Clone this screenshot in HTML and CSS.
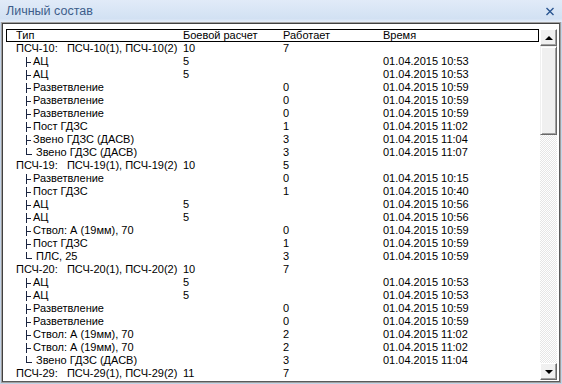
FILE: index.html
```html
<!DOCTYPE html>
<html lang="ru">
<head>
<meta charset="utf-8">
<title>Личный состав</title>
<link rel="stylesheet" href="styles.css">
</head>
<body>
<div class="window">
  <div class="titlebar">
    <span class="title">Личный состав</span>
    <svg class="close" width="10" height="9" viewBox="0 0 10 9"><path d="M1.5 1 L8.5 8 M8.5 1 L1.5 8" stroke="#2a5590" stroke-width="1.4" fill="none"/></svg>
  </div>
  <div class="panel">
    <div class="panel-body">
      <div class="list">
        <div class="header">
          <span class="c1">Тип</span><span>Боевой расчет</span><span>Работает</span><span>Время</span>
        </div>
        <div class="rows">
          <div class="row"><span class="c1">ПСЧ-10:   ПСЧ-10(1), ПСЧ-10(2)</span><span>10</span><span>7</span><span></span></div>
          <div class="row"><span class="c1"><i class="br"></i>АЦ</span><span>5</span><span></span><span>01.04.2015 10:53</span></div>
          <div class="row"><span class="c1"><i class="br"></i>АЦ</span><span>5</span><span></span><span>01.04.2015 10:53</span></div>
          <div class="row"><span class="c1"><i class="br"></i>Разветвление</span><span></span><span>0</span><span>01.04.2015 10:59</span></div>
          <div class="row"><span class="c1"><i class="br"></i>Разветвление</span><span></span><span>0</span><span>01.04.2015 10:59</span></div>
          <div class="row"><span class="c1"><i class="br"></i>Разветвление</span><span></span><span>0</span><span>01.04.2015 10:59</span></div>
          <div class="row"><span class="c1"><i class="br"></i>Пост ГДЗС</span><span></span><span>1</span><span>01.04.2015 11:02</span></div>
          <div class="row"><span class="c1"><i class="br"></i>Звено ГДЗС (ДАСВ)</span><span></span><span>3</span><span>01.04.2015 11:04</span></div>
          <div class="row"><span class="c1"><i class="br last"></i>Звено ГДЗС (ДАСВ)</span><span></span><span>3</span><span>01.04.2015 11:07</span></div>
          <div class="row"><span class="c1">ПСЧ-19:   ПСЧ-19(1), ПСЧ-19(2)</span><span>10</span><span>5</span><span></span></div>
          <div class="row"><span class="c1"><i class="br"></i>Разветвление</span><span></span><span>0</span><span>01.04.2015 10:15</span></div>
          <div class="row"><span class="c1"><i class="br"></i>Пост ГДЗС</span><span></span><span>1</span><span>01.04.2015 10:40</span></div>
          <div class="row"><span class="c1"><i class="br"></i>АЦ</span><span>5</span><span></span><span>01.04.2015 10:56</span></div>
          <div class="row"><span class="c1"><i class="br"></i>АЦ</span><span>5</span><span></span><span>01.04.2015 10:56</span></div>
          <div class="row"><span class="c1"><i class="br"></i>Ствол: А (19мм), 70</span><span></span><span>0</span><span>01.04.2015 10:59</span></div>
          <div class="row"><span class="c1"><i class="br"></i>Пост ГДЗС</span><span></span><span>1</span><span>01.04.2015 10:59</span></div>
          <div class="row"><span class="c1"><i class="br last"></i>ПЛС, 25</span><span></span><span>3</span><span>01.04.2015 10:59</span></div>
          <div class="row"><span class="c1">ПСЧ-20:   ПСЧ-20(1), ПСЧ-20(2)</span><span>10</span><span>7</span><span></span></div>
          <div class="row"><span class="c1"><i class="br"></i>АЦ</span><span>5</span><span></span><span>01.04.2015 10:53</span></div>
          <div class="row"><span class="c1"><i class="br"></i>АЦ</span><span>5</span><span></span><span>01.04.2015 10:53</span></div>
          <div class="row"><span class="c1"><i class="br"></i>Разветвление</span><span></span><span>0</span><span>01.04.2015 10:59</span></div>
          <div class="row"><span class="c1"><i class="br"></i>Разветвление</span><span></span><span>0</span><span>01.04.2015 10:59</span></div>
          <div class="row"><span class="c1"><i class="br"></i>Ствол: А (19мм), 70</span><span></span><span>2</span><span>01.04.2015 11:02</span></div>
          <div class="row"><span class="c1"><i class="br"></i>Ствол: А (19мм), 70</span><span></span><span>2</span><span>01.04.2015 11:02</span></div>
          <div class="row"><span class="c1"><i class="br last"></i>Звено ГДЗС (ДАСВ)</span><span></span><span>3</span><span>01.04.2015 11:04</span></div>
          <div class="row"><span class="c1">ПСЧ-29:   ПСЧ-29(1), ПСЧ-29(2)</span><span>11</span><span>7</span><span></span></div>
        </div>
      </div>
      <div class="scrollbar">
        <div class="sbtn"><span class="tri up"></span></div>
        <div class="thumb"></div>
        <div class="track"></div>
        <div class="sbtn"><span class="tri down"></span></div>
      </div>
    </div>
  </div>
</div>
</body>
</html>
```
FILE: styles.css
```css
* { box-sizing: border-box; }
html, body { margin: 0; padding: 0; }
body { width: 562px; height: 384px; overflow: hidden; }
.window {
  width: 562px; height: 384px;
  background: #c4d4e8;
  display: flex; flex-direction: column;
  font-family: "Liberation Sans", Arial, sans-serif;
}
.titlebar {
  height: 22px; flex: none;
  background: linear-gradient(#e1ebf8, #d2e1f3 85%, #e6eef9);
  display: flex; align-items: center; justify-content: space-between;
  padding: 0 6px 1px 6px;
}
.title { font-size: 12.5px; color: #3d5d8a; }
.close { display: block; margin-top: 1px; margin-right: 1px; }
.panel {
  flex: 1; margin: 0 1px 1px 1px;
  border: 1px solid #a0a0a0;
  background: #fff;
  display: flex;
}
.panel-body {
  flex: 1;
  border: 1px solid #404040;
  border-right-color: #5a5a5a; border-bottom-color: #5a5a5a;
  padding: 5px 2px 1px 3px;
  display: flex;
  min-height: 0;
}
.list { flex: 1; min-width: 0; overflow: hidden; font-size: 11px; color: #000; }
.header, .row {
  display: grid;
  grid-template-columns: 167px 100px 100px 1fr;
  height: 13px; line-height: 13px;
  white-space: pre;
}
.header { border: 1px solid #000; padding-left: 9px; line-height: 11px; margin-right: 1px; }
.row { padding-left: 10px; }
.c1 { overflow: hidden; padding-right: 5px; display: flex; align-items: center; }
.br { position: relative; display: inline-block; width: 7px; height: 13px; margin-left: 10px; flex: none; }
.br::before { content: ""; position: absolute; left: 0; top: 2px; width: 1px; height: 10px; background: #1a2440; }
.br::after { content: ""; position: absolute; left: 0; top: 7px; width: 5px; height: 1px; background: #1a2440; }
.br.last { width: 10px; }
.br.last::before { top: 2px; height: 6px; }
.br.last::after { top: 8px; width: 6px; }
.scrollbar { width: 17px; flex: none; display: flex; flex-direction: column; }
.sbtn {
  height: 17px; flex: none;
  background: #f0f0f0;
  border: 1px solid; border-color: #fff #696969 #696969 #fff;
  box-shadow: inset -1px -1px #a0a0a0;
  display: flex; align-items: center; justify-content: center;
}
.tri { width: 0; height: 0; border-left: 4px solid transparent; border-right: 4px solid transparent; }
.tri.up { border-bottom: 4px solid #000; }
.tri.down { border-top: 4px solid #000; }
.thumb {
  height: 89px; flex: none;
  background: #f0f0f0;
  border: 1px solid; border-color: #f0f0f0 #696969 #696969 #f0f0f0;
  box-shadow: inset 1px 1px #fff, inset -1px -1px #a0a0a0;
}
.track {
  flex: 1;
  background: repeating-conic-gradient(#fff 0 25%, #e6e6e6 0 50%) 0 0 / 2px 2px;
}
```
